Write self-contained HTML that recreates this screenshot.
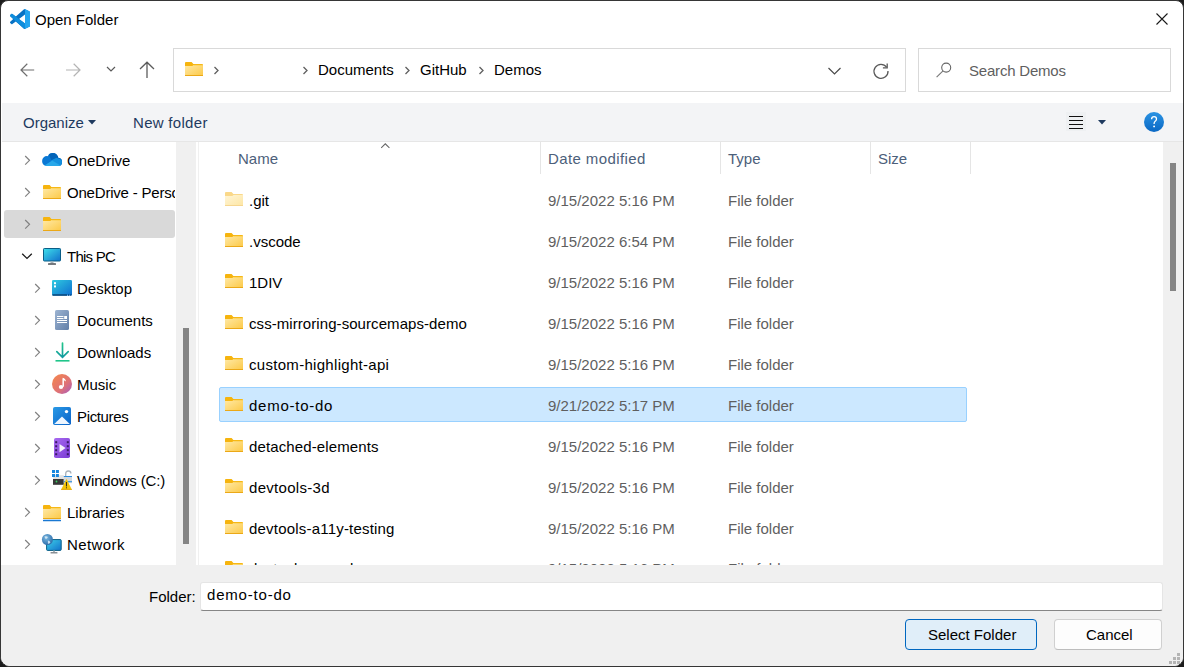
<!DOCTYPE html>
<html><head><meta charset="utf-8">
<style>
html,body{margin:0;padding:0;width:1184px;height:667px;overflow:hidden;background:#1c1c1c;}
*{box-sizing:border-box;}
body{font-family:"Liberation Sans",sans-serif;font-size:15px;color:#000;position:relative;}
.win{position:absolute;left:0;top:0;width:1184px;height:667px;background:#fff;border:1px solid #363636;border-radius:8px 8px 10px 10px;overflow:hidden;}
.in{position:absolute;left:0;top:0;width:1182px;height:665px;}
.a{position:absolute;}
.t{position:absolute;white-space:nowrap;line-height:18px;height:18px;}
svg{position:absolute;overflow:visible;}
</style></head>
<body>
<svg width="0" height="0" style="position:absolute">
  <defs>
    <linearGradient id="fg" x1="0" y1="0" x2="1" y2="1">
      <stop offset="0" stop-color="#ffe9a6"/>
      <stop offset="1" stop-color="#fcc947"/>
    </linearGradient>
    <linearGradient id="fgl" x1="0" y1="0" x2="1" y2="1">
      <stop offset="0" stop-color="#fff5d6"/>
      <stop offset="1" stop-color="#fde6a4"/>
    </linearGradient>
    <symbol id="fold" viewBox="0 0 18 14">
      <path d="M0 1 Q0 0 1 0 H6.6 L8.4 2 H17 Q18 2 18 3 V5 H0 Z" fill="#f6b40e"/>
      <path d="M0 3.9 H7.2 L8.6 3 H18 V13 Q18 14 17 14 H1 Q0 14 0 13 Z" fill="url(#fg)"/>
      <rect x="8.6" y="2.8" width="9.4" height="0.6" fill="#f9c93a"/>
      <rect x="0" y="13" width="18" height="1" fill="#eba817"/>
    </symbol>
    <symbol id="foldl" viewBox="0 0 18 14">
      <path d="M0 1 Q0 0 1 0 H6.6 L8.4 2 H17 Q18 2 18 3 V5 H0 Z" fill="#fad889"/>
      <path d="M0 3.9 H7.2 L8.6 3 H18 V13 Q18 14 17 14 H1 Q0 14 0 13 Z" fill="url(#fgl)"/>
      <rect x="0" y="13" width="18" height="1" fill="#f6d690"/>
    </symbol>
  </defs>
</svg>
<div class="win"><div class="in">
  <!-- ============ TITLE BAR ============ -->
  <svg style="left:9px;top:8px" width="20" height="20" viewBox="0 0 100 100">
    <path fill="#0872c4" d="M96.46 10.8L75.86.87a6.23 6.23 0 0 0-7.1 1.2L29.2 38.1 12 25.05a4.16 4.16 0 0 0-5.32.24L1.17 30.3a4.17 4.17 0 0 0 0 6.16L16.08 50 1.17 63.54a4.17 4.17 0 0 0 0 6.16l5.51 5.01a4.16 4.16 0 0 0 5.32.24l17.2-13.05 39.56 36.04a6.22 6.22 0 0 0 7.1 1.2l20.6-9.91A6.25 6.25 0 0 0 100 83.6V16.4a6.25 6.25 0 0 0-3.54-5.6zM75 72.7L45 50l30-22.7z"/>
    <path fill="#0f8ddc" d="M6.68 25.29a4.16 4.16 0 0 1 5.32-.24L75 72.7V99.5a6.22 6.22 0 0 1-6.24-1.4L1.17 36.46a4.17 4.17 0 0 1 0-6.16z"/>
    <path fill="#24a5ef" d="M75.86.87a6.23 6.23 0 0 0-7.1 1.2L75 2V98l.86.96 20.6-9.91A6.25 6.25 0 0 0 100 83.6V16.4a6.25 6.25 0 0 0-3.54-5.6z"/>
  </svg>
  <div class="t" style="left:34px;top:10px;">Open Folder</div>
  <svg style="left:1155px;top:12px" width="12" height="12" viewBox="0 0 12 12">
    <path d="M0.5 0.5 L11.5 11.5 M11.5 0.5 L0.5 11.5" stroke="#1a1a1a" stroke-width="1.1" fill="none"/>
  </svg>

  <!-- ============ NAV ROW ============ -->
  <svg style="left:19px;top:62px" width="16" height="14" viewBox="0 0 16 14">
    <path d="M1 7 H14.2 M7.3 0.8 L1 7 L7.3 13.2" stroke="#6f6f6f" stroke-width="1.2" fill="none"/>
  </svg>
  <svg style="left:64px;top:62px" width="16" height="14" viewBox="0 0 16 14">
    <path d="M1 7 H15 M8.7 0.8 L15 7 L8.7 13.2" stroke="#b4b4b4" stroke-width="1.2" fill="none"/>
  </svg>
  <svg style="left:105px;top:64px" width="10" height="8" viewBox="0 0 10 8">
    <path d="M1 2 L5 6 L9 2" stroke="#5a5a5a" stroke-width="1.2" fill="none"/>
  </svg>
  <svg style="left:138px;top:60px" width="16" height="17" viewBox="0 0 16 17">
    <path d="M8 1.2 V17 M1 8 L8 1.2 L15 8" stroke="#5c5c5c" stroke-width="1.3" fill="none"/>
  </svg>
  <!-- address box -->
  <div class="a" style="left:172px;top:47px;width:733px;height:44px;border:1px solid #d9d9d9;background:#fff;"></div>
  <svg style="left:184px;top:61px" width="18" height="14"><use href="#fold" width="18" height="14"/></svg>
  <svg style="left:212px;top:65px" width="7" height="9" viewBox="0 0 7 9">
    <path d="M1.5 1 L5 4.5 L1.5 8" stroke="#5f5f5f" stroke-width="1.3" fill="none"/>
  </svg>
  <svg style="left:301px;top:65px" width="7" height="9" viewBox="0 0 7 9">
    <path d="M1.5 1 L5 4.5 L1.5 8" stroke="#5f5f5f" stroke-width="1.3" fill="none"/>
  </svg>
  <div class="t" style="left:317px;top:60px;">Documents</div>
  <svg style="left:403px;top:65px" width="7" height="9" viewBox="0 0 7 9">
    <path d="M1.5 1 L5 4.5 L1.5 8" stroke="#5f5f5f" stroke-width="1.3" fill="none"/>
  </svg>
  <div class="t" style="left:419px;top:60px;">GitHub</div>
  <svg style="left:477px;top:65px" width="7" height="9" viewBox="0 0 7 9">
    <path d="M1.5 1 L5 4.5 L1.5 8" stroke="#5f5f5f" stroke-width="1.3" fill="none"/>
  </svg>
  <div class="t" style="left:493px;top:60px;">Demos</div>
  <svg style="left:826px;top:65px" width="15" height="10" viewBox="0 0 15 10">
    <path d="M1.5 2 L7.5 8 L13.5 2" stroke="#4a4a4a" stroke-width="1.2" fill="none"/>
  </svg>
  <svg style="left:871px;top:61px" width="18" height="18" viewBox="0 0 18 18">
    <path d="M14.6 5.2 A7 7 0 1 0 16 9" stroke="#5a5a5a" stroke-width="1.3" fill="none"/>
    <path d="M15.2 1.5 V5.8 H10.9" stroke="#5a5a5a" stroke-width="1.3" fill="none"/>
  </svg>
  <!-- search box -->
  <div class="a" style="left:917px;top:47px;width:253px;height:44px;border:1px solid #d9d9d9;background:#fff;"></div>
  <svg style="left:934px;top:61px" width="18" height="16" viewBox="0 0 18 16">
    <circle cx="11.2" cy="5.6" r="4.5" stroke="#666" stroke-width="1.1" fill="none"/>
    <path d="M8 8.9 L1.6 15.2" stroke="#777" stroke-width="1.1" fill="none"/>
  </svg>
  <div class="t" style="left:968px;top:61px;color:#5f5f5f;letter-spacing:-0.2px;">Search Demos</div>

  <!-- ============ COMMAND BAR ============ -->
  <div class="a" style="left:1px;top:102px;width:1182px;height:39px;background:#f3f4f6;border-bottom:1px solid #e6e6e6;"></div>
  <div class="t" style="left:22px;top:113px;color:#1e3a5f;">Organize</div>
  <svg style="left:87px;top:119px" width="8" height="5" viewBox="0 0 8 5"><path d="M0 0 H8 L4 4.5 Z" fill="#1e3a5f"/></svg>
  <div class="t" style="left:132px;top:113px;color:#1e3a5f;letter-spacing:0.3px;">New folder</div>
  <div class="a" style="left:1065px;top:111px;width:20px;height:19px;background:#eef0f2;"></div>
  <div class="a" style="left:1068px;top:115px;width:14px;height:1.2px;background:#111;"></div>
  <div class="a" style="left:1068px;top:119px;width:14px;height:1.2px;background:#111;"></div>
  <div class="a" style="left:1068px;top:123px;width:14px;height:1.2px;background:#111;"></div>
  <div class="a" style="left:1068px;top:127px;width:14px;height:1.2px;background:#111;"></div>
  <svg style="left:1097px;top:119px" width="8" height="5" viewBox="0 0 8 5"><path d="M0 0 H8 L4 4.5 Z" fill="#1e3a5f"/></svg>
  <svg style="left:1143px;top:111px" width="20" height="20" viewBox="0 0 20 20">
    <defs><linearGradient id="hg" x1="0" y1="0" x2="0" y2="1"><stop offset="0" stop-color="#2b93e3"/><stop offset="1" stop-color="#0a68c4"/></linearGradient></defs>
    <circle cx="10" cy="10" r="10" fill="url(#hg)"/>
    <path d="M7.6 7.2 Q7.6 4.6 10.1 4.6 Q12.5 4.6 12.5 7 Q12.5 8.3 11.2 9.2 Q10.1 10 10.1 11.4 V12" stroke="#fff" stroke-width="1.3" fill="none"/>
    <circle cx="10.1" cy="14.4" r="0.95" fill="#fff"/>
  </svg>
  <!-- ============ NAV PANE ============ -->
  <div class="a" style="left:3px;top:209px;width:171px;height:28px;background:#d9d9d9;border-radius:3px;"></div>
  <div class="a" style="left:175px;top:141px;width:20px;height:423px;background:#f0f0f0;"></div>
  <div class="a" style="left:182px;top:327px;width:6px;height:216px;background:#858585;"></div>
  <div class="a" style="left:197px;top:141px;width:1px;height:423px;background:#f0f0f0;"></div>
  <svg style="left:23px;top:154px" width="7" height="11" viewBox="0 0 7 11"><path d="M1.2 1 L5.5 5.3 L1.2 9.6" stroke="#808080" stroke-width="1.2" fill="none"/></svg>
  <svg style="left:41px;top:152px" width="20" height="14" viewBox="0 0 20 14">
    <defs><clipPath id="cc"><circle cx="5" cy="8" r="4.9"/><circle cx="10.8" cy="5.6" r="5.6"/><circle cx="16.1" cy="9" r="3.9"/><rect x="4" y="8" width="12" height="4.9"/></clipPath></defs>
    <g clip-path="url(#cc)">
      <rect x="0" y="0" width="20" height="14" fill="#0a78d4"/>
      <path d="M6 0 H20 V14 L9.5 7.2 Z" fill="#0364b8"/>
      <path d="M9 7.6 L14.5 4.8 L20 7 V14 Z" fill="#1490df"/>
      <path d="M0 14 L10.2 7.6 L20 13.4 V14 Z" fill="#28a8ea"/>
    </g>
  </svg>
  <div class="t" style="left:66px;top:151px;">OneDrive</div>
  <svg style="left:23px;top:186px" width="7" height="11" viewBox="0 0 7 11"><path d="M1.2 1 L5.5 5.3 L1.2 9.6" stroke="#808080" stroke-width="1.2" fill="none"/></svg>
  <svg style="left:42px;top:184px" width="18" height="14"><use href="#fold" width="18" height="14"/></svg>
  <div class="t" style="left:66px;top:183px;width:108px;overflow:hidden;letter-spacing:-0.2px;">OneDrive - Personal</div>
  <svg style="left:23px;top:218px" width="7" height="11" viewBox="0 0 7 11"><path d="M1.2 1 L5.5 5.3 L1.2 9.6" stroke="#808080" stroke-width="1.2" fill="none"/></svg>
  <svg style="left:42px;top:216px" width="18" height="14"><use href="#fold" width="18" height="14"/></svg>
  <svg style="left:20px;top:251px" width="12" height="8" viewBox="0 0 12 8"><path d="M1.2 1.8 L6 6.4 L10.8 1.8" stroke="#1a1a1a" stroke-width="1.3" fill="none"/></svg>
  <svg style="left:42px;top:247px" width="18" height="17" viewBox="0 0 18 17">
    <defs><linearGradient id="pcg" x1="0" y1="0" x2="1" y2="1"><stop offset="0" stop-color="#3fe0ea"/><stop offset="1" stop-color="#1170cc"/></linearGradient></defs>
    <rect x="0.5" y="0.5" width="17" height="12.5" rx="0.8" fill="url(#pcg)" stroke="#0b5e86" stroke-width="1"/>
    <rect x="7.5" y="13.5" width="3" height="1.8" fill="#a9b4ba"/>
    <rect x="5" y="15.2" width="8" height="1.6" rx="0.6" fill="#4a4f55"/>
  </svg>
  <div class="t" style="left:66px;top:247px;letter-spacing:-0.75px;">This PC</div>
  <svg style="left:33px;top:282px" width="7" height="11" viewBox="0 0 7 11"><path d="M1.2 1 L5.5 5.3 L1.2 9.6" stroke="#808080" stroke-width="1.2" fill="none"/></svg>
  <svg style="left:51px;top:279px" width="20" height="16" viewBox="0 0 20 16">
    <defs><linearGradient id="dkg" x1="0" y1="0" x2="1" y2="1"><stop offset="0" stop-color="#30cbe0"/><stop offset="1" stop-color="#0e6ed0"/></linearGradient></defs>
    <rect x="0" y="0" width="20" height="15.5" rx="1.2" fill="url(#dkg)"/>
    <rect x="0.5" y="14.2" width="14.5" height="1.6" fill="#0a4a7e"/>
    <rect x="16" y="14.2" width="1.2" height="1.6" fill="#0a4a7e"/>
    <rect x="18.2" y="14.2" width="1.2" height="1.6" fill="#0a4a7e"/>
    <rect x="2" y="2.2" width="2" height="2" fill="#fff"/>
    <rect x="2" y="5.4" width="2" height="2" fill="#fff"/>
  </svg>
  <div class="t" style="left:76px;top:279px;">Desktop</div>
  <svg style="left:33px;top:314px" width="7" height="11" viewBox="0 0 7 11"><path d="M1.2 1 L5.5 5.3 L1.2 9.6" stroke="#808080" stroke-width="1.2" fill="none"/></svg>
  <svg style="left:54px;top:309px" width="14" height="20" viewBox="0 0 14 20">
    <defs><linearGradient id="dcg" x1="0" y1="0" x2="1" y2="1"><stop offset="0" stop-color="#9db4d2"/><stop offset="1" stop-color="#627fa8"/></linearGradient></defs>
    <rect x="0" y="0" width="14" height="20" rx="1.6" fill="url(#dcg)"/>
    <rect x="2" y="6" width="6.5" height="1" fill="#fff"/>
    <rect x="2" y="8" width="6.5" height="1" fill="#fff"/>
    <rect x="2" y="10" width="10" height="1" fill="#fff"/>
    <rect x="2" y="12" width="10" height="1" fill="#fff"/>
    <rect x="9.2" y="6" width="2.8" height="3" fill="#fff"/>
  </svg>
  <div class="t" style="left:76px;top:311px;">Documents</div>
  <svg style="left:33px;top:346px" width="7" height="11" viewBox="0 0 7 11"><path d="M1.2 1 L5.5 5.3 L1.2 9.6" stroke="#808080" stroke-width="1.2" fill="none"/></svg>
  <svg style="left:54px;top:341px" width="16" height="22" viewBox="0 0 16 22">
    <defs><linearGradient id="dlg" x1="0" y1="0" x2="0" y2="1"><stop offset="0" stop-color="#22c68a"/><stop offset="1" stop-color="#119aa0"/></linearGradient></defs>
    <path d="M7.5 1 V15 M1.8 9.6 L7.5 15.3 L13.2 9.6" stroke="url(#dlg)" stroke-width="1.7" fill="none" stroke-linecap="round"/>
    <rect x="0.5" y="18" width="14" height="1.6" fill="#20c58a"/>
  </svg>
  <div class="t" style="left:76px;top:343px;">Downloads</div>
  <svg style="left:33px;top:378px" width="7" height="11" viewBox="0 0 7 11"><path d="M1.2 1 L5.5 5.3 L1.2 9.6" stroke="#808080" stroke-width="1.2" fill="none"/></svg>
  <svg style="left:51px;top:373px" width="20" height="20" viewBox="0 0 20 20">
    <defs><linearGradient id="mug" x1="0" y1="0" x2="1" y2="1"><stop offset="0" stop-color="#f6884a"/><stop offset="0.6" stop-color="#df7276"/><stop offset="1" stop-color="#a45ac4"/></linearGradient></defs>
    <circle cx="10" cy="10" r="10" fill="url(#mug)"/>
    <path d="M11.2 4.4 V12.8" stroke="#fff" stroke-width="1.5"/>
    <path d="M10.6 3.8 Q13.6 4.4 13.9 7.2 L12.7 7 Q12.4 5.8 11 5.6 Z" fill="#fff"/>
    <ellipse cx="9" cy="12.9" rx="2.2" ry="2" fill="#fff"/>
  </svg>
  <div class="t" style="left:76px;top:375px;">Music</div>
  <svg style="left:33px;top:410px" width="7" height="11" viewBox="0 0 7 11"><path d="M1.2 1 L5.5 5.3 L1.2 9.6" stroke="#808080" stroke-width="1.2" fill="none"/></svg>
  <svg style="left:52px;top:406px" width="18" height="18" viewBox="0 0 18 18">
    <defs><linearGradient id="pig" x1="0" y1="0" x2="1" y2="1"><stop offset="0" stop-color="#2a9ae6"/><stop offset="1" stop-color="#0a62c8"/></linearGradient></defs>
    <rect x="0" y="0" width="18" height="18" rx="1.8" fill="url(#pig)"/>
    <path d="M1.2 17 L9 9.4 L16.8 17 Z" fill="#eef6ff"/>
    <circle cx="13.5" cy="4.6" r="1.7" fill="#fff"/>
  </svg>
  <div class="t" style="left:76px;top:407px;letter-spacing:-0.35px;">Pictures</div>
  <svg style="left:33px;top:442px" width="7" height="11" viewBox="0 0 7 11"><path d="M1.2 1 L5.5 5.3 L1.2 9.6" stroke="#808080" stroke-width="1.2" fill="none"/></svg>
  <svg style="left:53px;top:437px" width="16" height="20" viewBox="0 0 16 20">
    <defs><linearGradient id="vig" x1="0" y1="0" x2="1" y2="1"><stop offset="0" stop-color="#a86af0"/><stop offset="1" stop-color="#7a3ad4"/></linearGradient></defs>
    <rect x="0" y="0" width="16" height="20" rx="1.8" fill="url(#vig)"/>
    <g fill="#3a1a66"><rect x="1.2" y="3.2" width="2" height="2"/><rect x="1.2" y="7.2" width="2" height="2"/><rect x="1.2" y="11.2" width="2" height="2"/><rect x="1.2" y="15.2" width="2" height="2"/>
    <rect x="12.8" y="3.2" width="2" height="2"/><rect x="12.8" y="7.2" width="2" height="2"/><rect x="12.8" y="11.2" width="2" height="2"/><rect x="12.8" y="15.2" width="2" height="2"/></g>
    <path d="M5.5 6 V14.2 L11.6 10.1 Z" fill="#f4f0fa"/>
  </svg>
  <div class="t" style="left:76px;top:439px;">Videos</div>
  <svg style="left:33px;top:474px" width="7" height="11" viewBox="0 0 7 11"><path d="M1.2 1 L5.5 5.3 L1.2 9.6" stroke="#808080" stroke-width="1.2" fill="none"/></svg>
  <svg style="left:51px;top:469px" width="21" height="21" viewBox="0 0 21 21">
    <rect x="1.2" y="5.2" width="10.6" height="3.8" fill="#e2e2e2"/>
    <g fill="#1786de"><rect x="0" y="0" width="3" height="3"/><rect x="3.9" y="0" width="3" height="3"/><rect x="0" y="4" width="3" height="3"/><rect x="3.9" y="4" width="3" height="3"/></g>
    <rect x="1" y="9" width="10.8" height="5.8" fill="#383838"/>
    <circle cx="4.5" cy="11.5" r="0.9" fill="#3ad060"/>
    <path d="M13.7 6.5 V3.9 Q13.7 1 16.3 1 Q18.9 1 18.9 3.6" stroke="#a9b2ba" stroke-width="1.3" fill="none"/>
    <rect x="11.8" y="6" width="8.2" height="7.2" fill="#d2d8de"/>
    <rect x="11.8" y="6" width="8.2" height="1" fill="#2b8ee0"/>
    <rect x="11.8" y="11.2" width="8.2" height="1" fill="#2b8ee0"/>
    <path d="M14.5 8.8 L19.9 19.7 H9.1 Z" fill="#f5c40a"/><rect x="9.1" y="18.9" width="10.8" height="0.8" fill="#e0a000"/>
    <rect x="13.95" y="12" width="0.95" height="4.4" fill="#222"/>
    <rect x="13.95" y="17.3" width="0.95" height="1" fill="#222"/>
  </svg>
  <div class="t" style="left:76px;top:471px;letter-spacing:-0.17px;">Windows (C:)</div>
  <svg style="left:23px;top:506px" width="7" height="11" viewBox="0 0 7 11"><path d="M1.2 1 L5.5 5.3 L1.2 9.6" stroke="#808080" stroke-width="1.2" fill="none"/></svg>
  <svg style="left:42px;top:504px" width="18" height="17" viewBox="0 0 18 17">
    <use href="#fold" width="18" height="14"/>
    <rect x="0" y="14.8" width="18" height="1.5" rx="0.5" fill="#1a78d2"/>
  </svg>
  <div class="t" style="left:66px;top:503px;">Libraries</div>
  <svg style="left:23px;top:538px" width="7" height="11" viewBox="0 0 7 11"><path d="M1.2 1 L5.5 5.3 L1.2 9.6" stroke="#808080" stroke-width="1.2" fill="none"/></svg>
  <svg style="left:41px;top:533px" width="21" height="21" viewBox="0 0 21 21">
    <defs><linearGradient id="nmg" x1="0" y1="0" x2="1" y2="1"><stop offset="0" stop-color="#3fd2e8"/><stop offset="1" stop-color="#1272cc"/></linearGradient>
    <radialGradient id="ngg" cx="0.4" cy="0.35" r="0.7"><stop offset="0" stop-color="#7ab8e0"/><stop offset="1" stop-color="#2a6aa8"/></radialGradient></defs>
    <rect x="4.6" y="5.6" width="14.6" height="10.8" rx="0.8" fill="url(#nmg)" stroke="#0b5e86" stroke-width="1"/>
    <rect x="11" y="16.6" width="2" height="1.6" fill="#a9b4ba"/>
    <rect x="8.5" y="18" width="7" height="1.4" rx="0.5" fill="#8a9096"/>
    <circle cx="5.4" cy="5.5" r="5.5" fill="url(#ngg)"/>
    <path d="M2.4 2.6 Q4.4 1.6 5.9 3.1 Q5.4 4.6 3.9 5.1 Q2.9 4.1 2.4 2.6 Z M5.9 6.6 Q7.9 6.6 8.4 8.6 Q7.4 10.1 5.9 9.6 Z" fill="#dfeef8" opacity="0.85"/>
  </svg>
  <div class="t" style="left:66px;top:535px;letter-spacing:0.4px;">Network</div>
  <!-- ============ FILE LIST ============ -->
  <svg style="left:379px;top:142px" width="10" height="6" viewBox="0 0 10 6"><path d="M1.2 4.9 L5.3 0.8 L9.4 4.9" stroke="#666" stroke-width="1.05" fill="none"/></svg>
  <div class="t" style="left:237px;top:149px;color:#4c607a;">Name</div>
  <div class="t" style="left:547px;top:149px;color:#4c607a;letter-spacing:0.4px;">Date modified</div>
  <div class="t" style="left:727px;top:149px;color:#4c607a;">Type</div>
  <div class="t" style="left:877px;top:149px;color:#4c607a;">Size</div>
  <div class="a" style="left:539px;top:141px;width:1px;height:32px;background:#e5e5e5;"></div>
  <div class="a" style="left:719px;top:141px;width:1px;height:32px;background:#e5e5e5;"></div>
  <div class="a" style="left:869px;top:141px;width:1px;height:32px;background:#e5e5e5;"></div>
  <div class="a" style="left:969px;top:141px;width:1px;height:32px;background:#e5e5e5;"></div>
  <div class="a" style="left:218px;top:386px;width:748px;height:35px;background:#cce8ff;border:1px solid #99d1ff;border-radius:2px;"></div>
  <svg style="left:224px;top:191px" width="18" height="14"><use href="#foldl" width="18" height="14"/></svg>
  <div class="t" style="left:248px;top:191px;">.git</div>
  <div class="t" style="left:547px;top:191px;color:#5f5f5f;">9/15/2022 5:16 PM</div>
  <div class="t" style="left:727px;top:191px;color:#5f5f5f;">File folder</div>
  <svg style="left:224px;top:232px" width="18" height="14"><use href="#fold" width="18" height="14"/></svg>
  <div class="t" style="left:248px;top:232px;">.vscode</div>
  <div class="t" style="left:547px;top:232px;color:#5f5f5f;">9/15/2022 6:54 PM</div>
  <div class="t" style="left:727px;top:232px;color:#5f5f5f;">File folder</div>
  <svg style="left:224px;top:273px" width="18" height="14"><use href="#fold" width="18" height="14"/></svg>
  <div class="t" style="left:248px;top:273px;">1DIV</div>
  <div class="t" style="left:547px;top:273px;color:#5f5f5f;">9/15/2022 5:16 PM</div>
  <div class="t" style="left:727px;top:273px;color:#5f5f5f;">File folder</div>
  <svg style="left:224px;top:314px" width="18" height="14"><use href="#fold" width="18" height="14"/></svg>
  <div class="t" style="left:248px;top:314px;letter-spacing:0.07px;">css-mirroring-sourcemaps-demo</div>
  <div class="t" style="left:547px;top:314px;color:#5f5f5f;">9/15/2022 5:16 PM</div>
  <div class="t" style="left:727px;top:314px;color:#5f5f5f;">File folder</div>
  <svg style="left:224px;top:355px" width="18" height="14"><use href="#fold" width="18" height="14"/></svg>
  <div class="t" style="left:248px;top:355px;letter-spacing:0.3px;">custom-highlight-api</div>
  <div class="t" style="left:547px;top:355px;color:#5f5f5f;">9/15/2022 5:16 PM</div>
  <div class="t" style="left:727px;top:355px;color:#5f5f5f;">File folder</div>
  <svg style="left:224px;top:396px" width="18" height="14"><use href="#fold" width="18" height="14"/></svg>
  <div class="t" style="left:248px;top:396px;letter-spacing:0.75px;">demo-to-do</div>
  <div class="t" style="left:547px;top:396px;color:#5f5f5f;">9/21/2022 5:17 PM</div>
  <div class="t" style="left:727px;top:396px;color:#5f5f5f;">File folder</div>
  <svg style="left:224px;top:437px" width="18" height="14"><use href="#fold" width="18" height="14"/></svg>
  <div class="t" style="left:248px;top:437px;letter-spacing:0.12px;">detached-elements</div>
  <div class="t" style="left:547px;top:437px;color:#5f5f5f;">9/15/2022 5:16 PM</div>
  <div class="t" style="left:727px;top:437px;color:#5f5f5f;">File folder</div>
  <svg style="left:224px;top:478px" width="18" height="14"><use href="#fold" width="18" height="14"/></svg>
  <div class="t" style="left:248px;top:478px;letter-spacing:0.3px;">devtools-3d</div>
  <div class="t" style="left:547px;top:478px;color:#5f5f5f;">9/15/2022 5:16 PM</div>
  <div class="t" style="left:727px;top:478px;color:#5f5f5f;">File folder</div>
  <svg style="left:224px;top:519px" width="18" height="14"><use href="#fold" width="18" height="14"/></svg>
  <div class="t" style="left:248px;top:519px;letter-spacing:0.2px;">devtools-a11y-testing</div>
  <div class="t" style="left:547px;top:519px;color:#5f5f5f;">9/15/2022 5:16 PM</div>
  <div class="t" style="left:727px;top:519px;color:#5f5f5f;">File folder</div>
  <svg style="left:224px;top:560px" width="18" height="14"><use href="#fold" width="18" height="14"/></svg>
  <div class="t" style="left:248px;top:559px;">devtools-console</div>
  <div class="t" style="left:547px;top:559px;color:#5f5f5f;">9/15/2022 5:16 PM</div>
  <div class="t" style="left:727px;top:559px;color:#5f5f5f;">File folder</div>
  <div class="a" style="left:1162px;top:141px;width:20px;height:423px;background:#f0f0f0;"></div>
  <div class="a" style="left:1169px;top:162px;width:6px;height:128px;background:#858585;"></div>
  <!-- ============ BOTTOM ============ -->
  <div class="a" style="left:0;top:564px;width:1182px;height:101px;background:#f0f0f0;"></div>
  <div class="t" style="left:148px;top:587px;">Folder:</div>
  <div class="a" style="left:199px;top:581px;width:963px;height:29px;background:#fff;border:1px solid #e5e5e5;border-bottom:1px solid #868686;border-radius:3px;"></div>
  <div class="t" style="left:206px;top:585px;letter-spacing:0.8px;">demo-to-do</div>
  <div class="a" style="left:904px;top:618px;width:132px;height:31px;background:#e0eef9;border:1px solid #0067c0;border-radius:4px;"></div>
  <div class="t" style="left:927px;top:625px;">Select Folder</div>
  <div class="a" style="left:1053px;top:618px;width:108px;height:31px;background:#fdfdfd;border:1px solid #d0d0d0;border-bottom-color:#bdbdbd;border-radius:4px;"></div>
  <div class="t" style="left:1085px;top:625px;">Cancel</div>
  <div class="a" style="left:1176px;top:652px;width:3px;height:3px;background:#b4b4b4;"></div>
  <div class="a" style="left:1172px;top:656px;width:3px;height:3px;background:#b4b4b4;"></div>
  <div class="a" style="left:1176px;top:656px;width:3px;height:3px;background:#b4b4b4;"></div>
  <div class="a" style="left:1168px;top:660px;width:3px;height:3px;background:#b4b4b4;"></div>
  <div class="a" style="left:1172px;top:660px;width:3px;height:3px;background:#b4b4b4;"></div>
  <div class="a" style="left:1176px;top:660px;width:3px;height:3px;background:#b4b4b4;"></div>
</div></div>
</body></html>
